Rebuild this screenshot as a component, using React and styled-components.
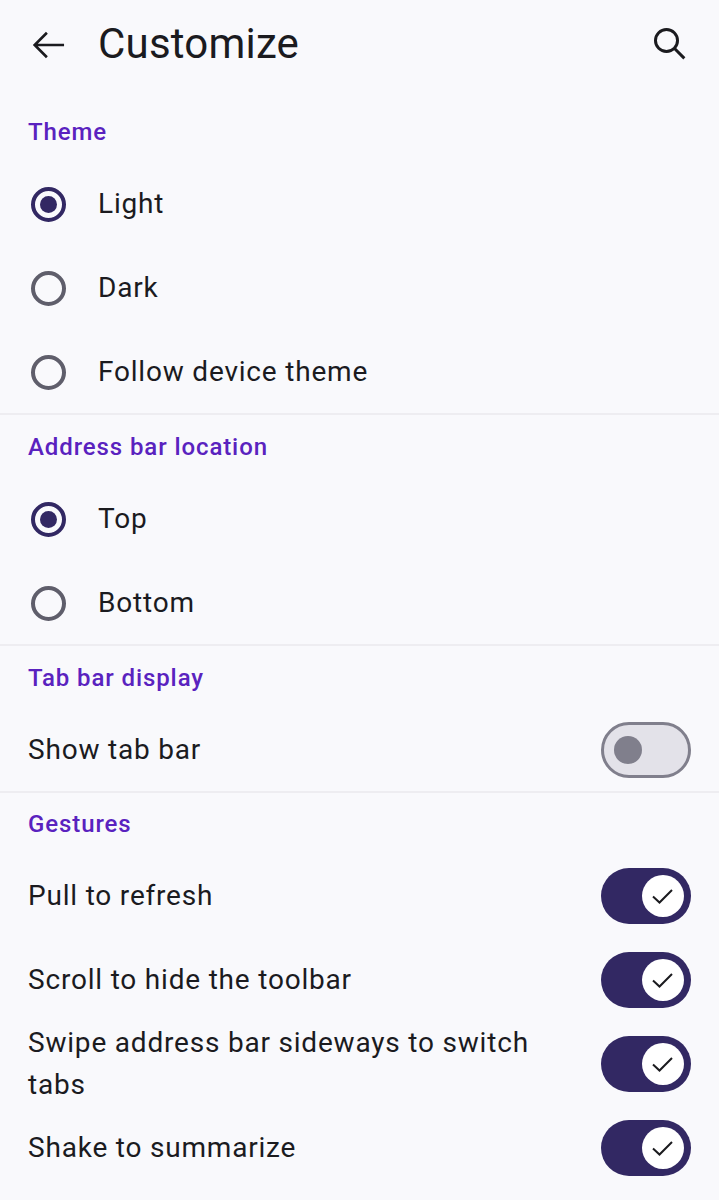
import React from "react";
import styled, { createGlobalStyle } from "styled-components";

const Global = createGlobalStyle`
  html, body { margin: 0; padding: 0; background: #f9f9fc; }
  body { font-family: Roboto, "Liberation Sans", sans-serif; }
`;

const Page = styled.div`
  width: 719px;
  height: 1200px;
  overflow: hidden;
  background: #f9f9fc;
  color: #1b1b1f;
`;

const Header = styled.header`
  height: 88px;
  display: flex;
  align-items: center;
  padding: 0 28px;
`;

const IconBox = styled.div`
  width: 42px;
  height: 42px;
  display: flex;
  align-items: center;
  justify-content: center;
  flex: none;
`;

const Title = styled.h1`
  flex: 1;
  margin: 0 0 0 28px;
  font-size: 42px;
  font-weight: 400;
  line-height: 48px;
  letter-spacing: 0.2px;
  color: #1b1b1f;
`;

const Section = styled.section`
  display: flex;
  flex-direction: column;
`;

const Divider = styled.hr`
  margin: -1px 0 0;
  border: 0;
  height: 2px;
  background: #eeedf1;
`;

const SectionTitle = styled.h2`
  margin: 0;
  padding: ${(p) => p.$top || 17}px 28px 14px;
  font-size: 24px;
  font-weight: 500;
  line-height: 31px;
  letter-spacing: 0.9px;
  color: #5a22bf;
`;

const Row = styled.div`
  height: 84px;
  display: flex;
  align-items: center;
  gap: 32px;
  padding: 0 28px;
`;

const Label = styled.span`
  flex: 1;
  font-size: 28px;
  line-height: 42px;
  letter-spacing: 0.8px;
  padding-right: ${(p) => (p.$wrap ? "30px" : "0")};
  color: #1b1b1f;
`;

const RadioOuter = styled.span`
  width: 35px;
  height: 35px;
  box-sizing: border-box;
  border-radius: 50%;
  border: 4px solid ${(p) => (p.$on ? "#322863" : "#5f5e6b")};
  display: flex;
  align-items: center;
  justify-content: center;
  margin-left: 3px;
  flex: none;
`;

const RadioDot = styled.span`
  width: 17px;
  height: 17px;
  border-radius: 50%;
  background: #322863;
`;

const Track = styled.span`
  width: 90px;
  height: 56px;
  box-sizing: border-box;
  border-radius: 28px;
  flex: none;
  display: flex;
  align-items: center;
  justify-content: ${(p) => (p.$on ? "flex-end" : "flex-start")};
  background: ${(p) => (p.$on ? "#322863" : "#e3e2e9")};
  border: ${(p) => (p.$on ? "none" : "3.5px solid #807f8c")};
  padding: ${(p) => (p.$on ? "0 7px 0 0" : "0 0 0 10px")};
`;

const ThumbOff = styled.span`
  width: 28px;
  height: 28px;
  border-radius: 50%;
  background: #807f8c;
`;

const ThumbOn = styled.span`
  width: 42px;
  height: 42px;
  border-radius: 50%;
  background: #fff;
  display: flex;
  align-items: center;
  justify-content: center;
`;

const ArrowIcon = () => (
  <svg width="42" height="42" viewBox="0 0 24 24" fill="none">
    <path d="M20.6 12.6H3.8M10.8 5.6l-7 7 7 7" stroke="#1b1b1f" strokeWidth="1.5" />
  </svg>
);

const SearchIcon = () => (
  <svg width="42" height="42" viewBox="0 0 24 24" fill="none">
    <circle cx="10" cy="10" r="6.3" stroke="#1b1b1f" strokeWidth="1.7" />
    <path d="M14.6 14.6l5.6 5.6" stroke="#1b1b1f" strokeWidth="1.7" />
  </svg>
);

const CheckIcon = () => (
  <svg width="24" height="24" viewBox="0 0 24 24" fill="none">
    <path d="M2 12.5l6.5 6L21 6" stroke="#1b1b1f" strokeWidth="2" />
  </svg>
);

const RadioRow = ({ on, children }) => (
  <Row>
    <RadioOuter $on={on}>{on && <RadioDot />}</RadioOuter>
    <Label>{children}</Label>
  </Row>
);

const SwitchRow = ({ on, wrap, children }) => (
  <Row>
    <Label $wrap={wrap}>{children}</Label>
    <Track $on={on}>
      {on ? (
        <ThumbOn>
          <CheckIcon />
        </ThumbOn>
      ) : (
        <ThumbOff />
      )}
    </Track>
  </Row>
);

export default function App() {
  return (
    <Page>
      <Global />
      <Header>
        <IconBox>
          <ArrowIcon />
        </IconBox>
        <Title>Customize</Title>
        <IconBox>
          <SearchIcon />
        </IconBox>
      </Header>
      <Section>
        <SectionTitle $top={29}>Theme</SectionTitle>
        <RadioRow on>Light</RadioRow>
        <RadioRow>Dark</RadioRow>
        <RadioRow>Follow device theme</RadioRow>
      </Section>
      <Divider />
      <Section>
        <SectionTitle>Address bar location</SectionTitle>
        <RadioRow on>Top</RadioRow>
        <RadioRow>Bottom</RadioRow>
      </Section>
      <Divider />
      <Section>
        <SectionTitle>Tab bar display</SectionTitle>
        <SwitchRow>Show tab bar</SwitchRow>
      </Section>
      <Divider />
      <Section>
        <SectionTitle $top={16}>Gestures</SectionTitle>
        <SwitchRow on>Pull to refresh</SwitchRow>
        <SwitchRow on>Scroll to hide the toolbar</SwitchRow>
        <SwitchRow on wrap>
          Swipe address bar sideways to switch tabs
        </SwitchRow>
        <SwitchRow on>Shake to summarize</SwitchRow>
      </Section>
    </Page>
  );
}
